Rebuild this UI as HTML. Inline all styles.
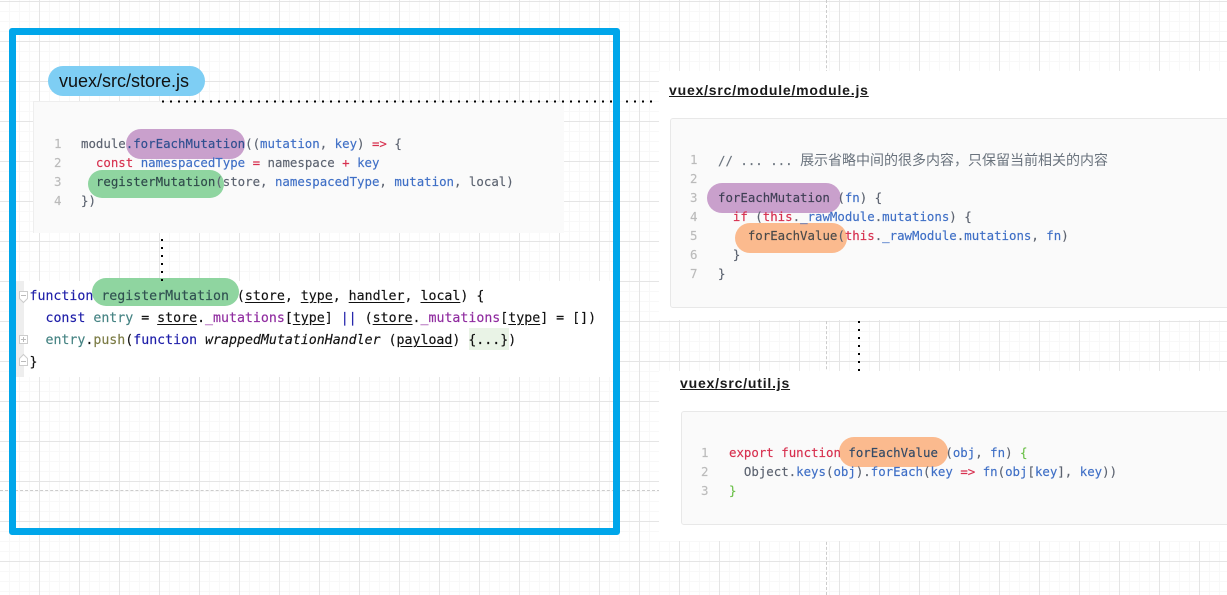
<!DOCTYPE html>
<html>
<head>
<meta charset="utf-8">
<style>
html,body{margin:0;padding:0;width:1227px;height:595px;overflow:hidden;background:#fff}
#c{position:relative;width:1227px;height:595px;overflow:hidden;background-color:#fff;
background-image:
linear-gradient(to right,#e5e5e5 1px,transparent 1px),
linear-gradient(to bottom,#e5e5e5 1px,transparent 1px),
linear-gradient(to right,#f8f8f8 1px,transparent 1px),
linear-gradient(to bottom,#f8f8f8 1px,transparent 1px);
background-size:40px 40px,40px 40px,10px 10px,10px 10px;
background-position:39px 0,0 1px,9px 0,0 1px}
.a{position:absolute}
.w{position:absolute;background:#fff}
.p{position:absolute;background:#fafafa;box-sizing:border-box}
.o{position:absolute;border-radius:15px}
.l{position:absolute;white-space:pre;font-family:"DejaVu Sans Mono","Liberation Mono",monospace;font-size:12.4px;line-height:20px;color:#5c6370;-webkit-text-stroke:.15px}
.b{font-size:13.25px;color:#111}
.n{color:#bbb}
.r{color:#d7304f}
.u{color:#3f6fc6}
.d{color:#2f4f8f}
.h{position:absolute;font-family:"Liberation Sans",sans-serif;font-weight:bold;font-size:14px;letter-spacing:.8px;line-height:16px;color:#1a1a1a;text-decoration:underline;white-space:pre}
.k{color:#1c1ca8}
.t{color:#458383}
.m{color:#8f2a9f}
.f{color:#7a7a43}
.x{text-decoration:underline;text-underline-offset:2px;color:#111}
</style>
</head>
<body>
<div id="c">
<!-- dashed guides -->
<div class="a" style="left:0;top:490px;width:660px;height:0;border-top:1px dashed #ccc"></div>
<div class="a" style="left:826px;top:0;width:0;height:595px;border-left:1px dashed #ccc"></div>

<!-- store.js block -->
<div class="p" style="left:33px;top:101px;width:531px;height:132px;border-left:1px solid #eee;border-top:1px solid #eee"></div>
<div class="w" style="left:16px;top:281px;width:597px;height:96px"></div>
<div class="a" style="left:16px;top:281px;width:8px;height:96px;background:#eeeeee"></div>

<!-- right panels -->
<div class="w" style="left:659px;top:71px;width:568px;height:249px"></div>
<div class="p" style="left:670px;top:118px;width:570px;height:190px;border:1px solid #e8e8e8;border-radius:3px"></div>
<div class="w" style="left:659px;top:371px;width:568px;height:170px"></div>
<div class="p" style="left:681px;top:411px;width:560px;height:114px;border:1px solid #e8e8e8;border-radius:3px"></div>

<!-- pills -->
<div class="o" style="left:48px;top:66px;width:157px;height:30px;background:#7ecef4"></div>
<div class="o" style="left:126px;top:129px;width:119px;height:30px;background:#c9a0cc"></div>
<div class="o" style="left:88px;top:170px;width:136px;height:28px;border-radius:14px;background:#8fd5a0"></div>
<div class="o" style="left:92px;top:278px;width:147px;height:28px;border-radius:14px;background:#8fd5a0"></div>
<div class="o" style="left:707px;top:183px;width:134px;height:30px;background:#c9a0cc"></div>
<div class="o" style="left:735px;top:223px;width:112px;height:30px;background:#fbba8e"></div>
<div class="o" style="left:839px;top:437px;width:109px;height:30px;background:#fbba8e"></div>

<!-- label -->
<div class="a" style="left:59px;top:70px;font-family:'Liberation Sans',sans-serif;font-size:18px;line-height:22px;color:#111;white-space:pre">vuex/src/store.js</div>

<!-- dotted connectors -->
<svg class="a" style="left:0;top:0" width="1227" height="595">
<line x1="162" y1="101.5" x2="656" y2="101.5" stroke="#000" stroke-width="2" stroke-dasharray="2 6"/>
<line x1="162" y1="239" x2="162" y2="282" stroke="#000" stroke-width="2" stroke-dasharray="2 6"/>
<line x1="859" y1="321" x2="859" y2="371" stroke="#000" stroke-width="2" stroke-dasharray="2 6"/>
<!-- fold icons -->
<path d="M19.500 291.500h8v7l-4 4-4-4z" fill="#fff" stroke="#ccc"/><path d="M21 295.500h5" stroke="#bbb"/>
<rect x="19.500" y="335.500" width="8" height="8" fill="#fff" stroke="#ccc"/><path d="M21 339.500h5M23.500 337v5" stroke="#bbb"/>
<path d="M19.500 365.500h8v-7l-4-4-4 4z" fill="#fff" stroke="#ccc"/><path d="M21 361.500h5" stroke="#bbb"/>
</svg>

<!-- store.js code -->
<div class="l n" style="left:54px;top:134px">1</div>
<div class="l n" style="left:54px;top:153px">2</div>
<div class="l n" style="left:54px;top:172px">3</div>
<div class="l n" style="left:54px;top:191px">4</div>
<div class="l" style="left:81px;top:134px">module<span class="d">.forEachMutation</span>((<span class="u">mutation</span>, <span class="u">key</span>) <span class="r">=&gt;</span> {</div>
<div class="l" style="left:81px;top:153px">  <span class="r">const</span> <span class="u">namespacedType</span> <span class="r">=</span> namespace <span class="r">+</span> <span class="u">key</span></div>
<div class="l" style="left:81px;top:172px">  <span style="color:#2f4a4a">registerMutation</span>(store, <span class="u">namespacedType</span>, <span class="u">mutation</span>, local)</div>
<div class="l" style="left:81px;top:191px">})</div>

<!-- IDE block -->
<div class="a" style="left:469px;top:328px;width:40px;height:22px;background:#e9f3e6"></div>
<div class="l b" style="left:29.5px;top:287px"><span class="k">function</span> <span style="color:#2f5050">registerMutation</span> (<span class="x">store</span>, <span class="x">type</span>, <span class="x">handler</span>, <span class="x">local</span>) {</div>
<div class="l b" style="left:29.5px;top:309px">  <span class="k">const</span> <span class="t">entry</span> = <span class="x">store</span>.<span class="m">_mutations</span>[<span class="x">type</span>] <span class="k">||</span> (<span class="x">store</span>.<span class="m">_mutations</span>[<span class="x">type</span>] = [])</div>
<div class="l b" style="left:29.5px;top:331px">  <span class="t">entry</span>.<span class="f">push</span>(<span class="k">function</span> <i>wrappedMutationHandler</i> (<span class="x">payload</span>) {...})</div>
<div class="l b" style="left:29.5px;top:353px">}</div>

<!-- module.js -->
<div class="h" style="left:669px;top:82px">vuex/src/module/module.js</div>
<div class="l n" style="left:690px;top:150px">1</div>
<div class="l n" style="left:690px;top:169px">2</div>
<div class="l n" style="left:690px;top:188px">3</div>
<div class="l n" style="left:690px;top:207px">4</div>
<div class="l n" style="left:690px;top:226px">5</div>
<div class="l n" style="left:690px;top:245px">6</div>
<div class="l n" style="left:690px;top:264px">7</div>
<div class="l" style="left:718px;top:150px;color:#6a737d">// ... ... <span style="font-family:'Liberation Sans','Noto Sans CJK SC',sans-serif;font-size:14px;-webkit-text-stroke:0">展示省略中间的很多内容&#xFF0C;只保留当前相关的内容</span></div>
<div class="l" style="left:718px;top:188px"><span style="color:#3f3f55">forEachMutation</span> (<span class="u">fn</span>) {</div>
<div class="l" style="left:718px;top:207px">  <span class="r">if</span> (<span class="r">this</span>.<span class="u">_rawModule</span>.<span class="u">mutations</span>) {</div>
<div class="l" style="left:718px;top:226px">    <span style="color:#4a4a4a">forEachValue</span>(<span class="r">this</span>.<span class="u">_rawModule</span>.<span class="u">mutations</span>, <span class="u">fn</span>)</div>
<div class="l" style="left:718px;top:245px">  }</div>
<div class="l" style="left:718px;top:264px">}</div>

<!-- util.js -->
<div class="h" style="left:680px;top:375px">vuex/src/util.js</div>
<div class="l n" style="left:701px;top:443px">1</div>
<div class="l n" style="left:701px;top:462px">2</div>
<div class="l n" style="left:701px;top:481px">3</div>
<div class="l" style="left:729px;top:443px"><span class="r">export</span> <span class="r">function</span> <span style="color:#334a66">forEachValue</span> (<span class="u">obj</span>, <span class="u">fn</span>) <span style="color:#6cc04a">{</span></div>
<div class="l" style="left:729px;top:462px">  Object.<span class="u">keys</span>(<span class="u">obj</span>).<span class="u">forEach</span>(<span class="u">key</span> <span class="r">=&gt;</span> <span class="u">fn</span>(<span class="u">obj</span>[<span class="u">key</span>], <span class="u">key</span>))</div>
<div class="l" style="left:729px;top:481px;color:#6cc04a">}</div>

<!-- blue frame -->
<div class="a" style="left:9px;top:28px;width:611px;height:507px;box-sizing:border-box;border:7px solid #00a6ea;border-radius:3px"></div>
</div>
</body>
</html>
